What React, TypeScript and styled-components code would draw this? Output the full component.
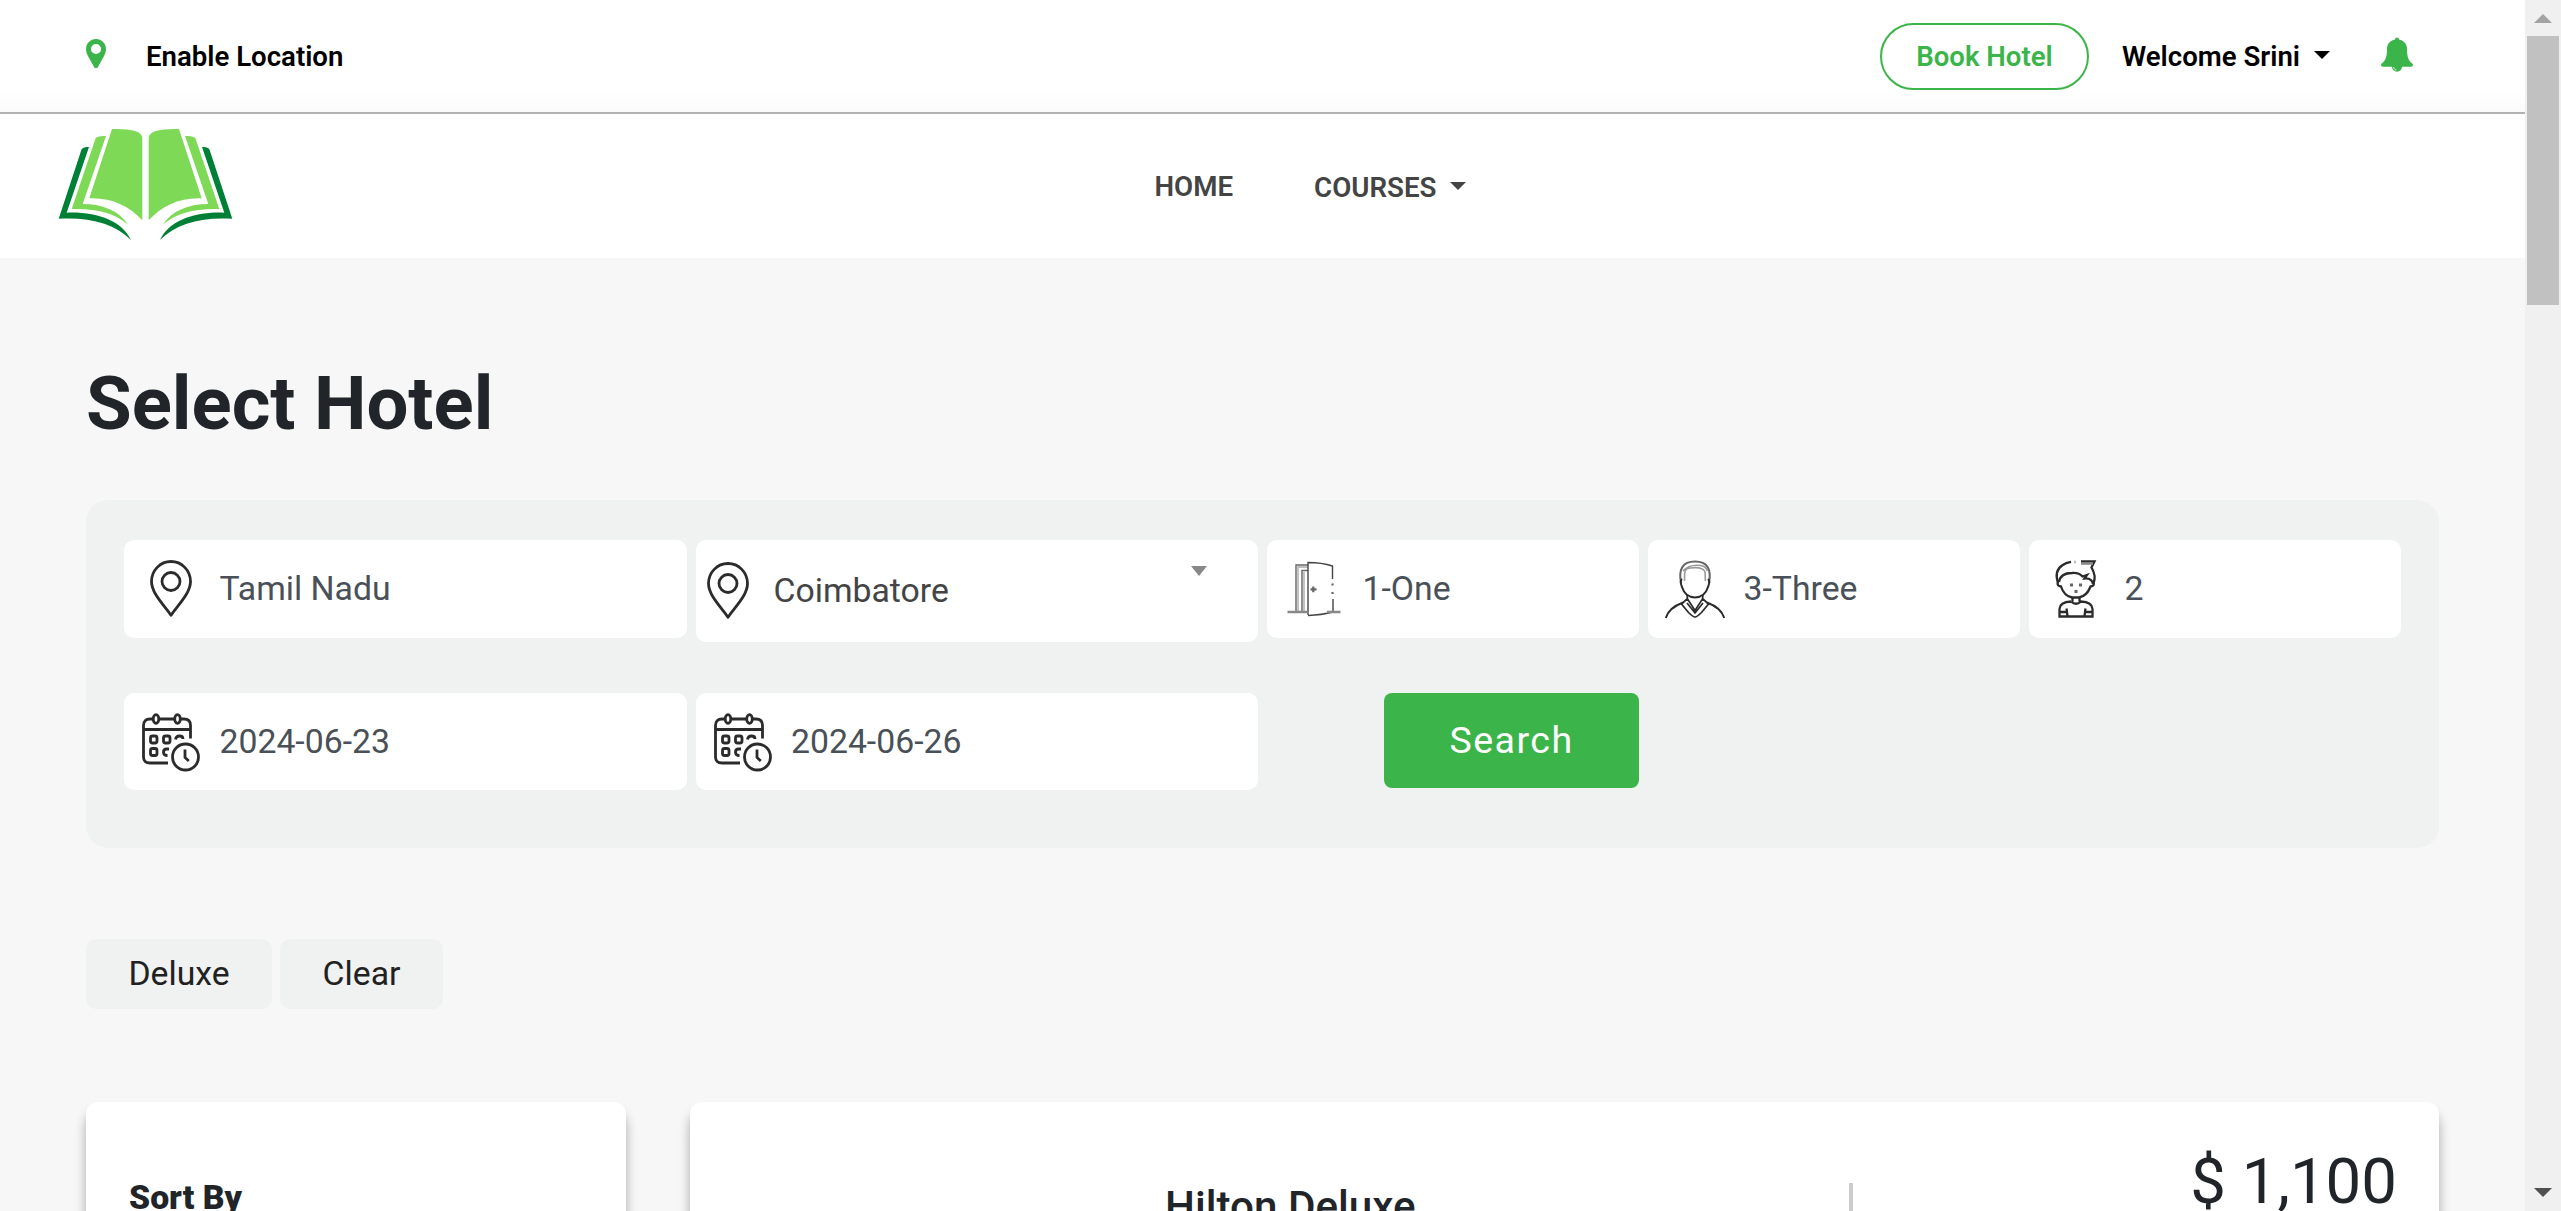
import React from 'react';
import styled, { createGlobalStyle } from 'styled-components';

const GlobalStyle = createGlobalStyle`
  * { box-sizing: border-box; }
  html, body { margin: 0; padding: 0; overflow: hidden; }
  body { font-family: Roboto, "Liberation Sans", sans-serif; color: #212529; background: #f7f7f7; }
`;

const Screen = styled.div`
  display: flex;
  width: 2561px;
  height: 1211px;
  overflow: hidden;
`;

const Page = styled.div`
  flex: 1;
  min-width: 0;
  display: flex;
  flex-direction: column;
  overflow: hidden;
  background: #f7f7f7;
`;

const TopBar = styled.div`
  flex: none;
  display: flex;
  align-items: center;
  height: 114px;
  padding: 0 112px 0 86px;
  border-bottom: 2px solid #b3b3b3;
  background: linear-gradient(#fff 80%, #fbfbfb);
  color: #000;
  font-size: 27.6px;
  font-weight: 600;
`;

const EnableLocation = styled.a`
  display: flex;
  align-items: center;
  gap: 40px;
  margin-right: auto;
  svg { margin-bottom: 5px; }
`;

const BookHotel = styled.button`
  width: 209px;
  height: 67px;
  padding: 0;
  border: 2px solid #3bb54a;
  border-radius: 34px;
  background: #fff;
  color: #3bb54a;
  font: inherit;
`;

const UserMenu = styled.div`
  display: flex;
  align-items: center;
  gap: 14px;
  margin: 0 51px 0 33px;
`;

const Caret = styled.span<{ $size?: number; $color?: string }>`
  width: 0;
  height: 0;
  margin-bottom: 2px;
  border: ${p => p.$size ?? 8}px solid transparent;
  border-top-color: ${p => p.$color ?? 'currentColor'};
  border-bottom: 0;
`;

const NavBar = styled.nav`
  flex: none;
  display: flex;
  align-items: center;
  height: 144px;
  padding-left: 56px;
  background: #fff;
`;

const NavLinks = styled.div`
  display: flex;
  align-items: center;
  gap: 81px;
  margin-left: 918.5px;
  color: #444;
  font-size: 27.7px;
  font-weight: 600;
`;

const NavLink = styled.a<{ $drop?: number }>`
  display: flex;
  align-items: center;
  gap: 14px;
  padding-top: ${p => p.$drop ?? 0}px;
`;

const Main = styled.main`
  flex: 1;
  display: flex;
  flex-direction: column;
  padding: 0 86px;
`;

const Title = styled.h1`
  flex: none;
  height: 242px;
  margin: 0;
  padding-top: 101px;
  font-size: 74.3px;
  line-height: 90px;
  font-weight: 700;
`;

const SearchPanel = styled.form`
  flex: none;
  height: 348px;
  padding: 40px 38px;
  border-radius: 22px;
  background: #eff2f1;
  display: grid;
  grid-template-columns: 562.5px 562.5px 372px 372px 372px;
  grid-template-rows: 102px 97px;
  column-gap: 9px;
  row-gap: 51px;
  align-items: start;
`;

const Field = styled.label<{ $height: number }>`
  display: flex;
  align-items: center;
  height: ${p => p.$height}px;
  border-radius: 10px;
  background: #fff;
`;

const IconSlot = styled.span<{ $compact?: boolean }>`
  flex: none;
  display: flex;
  justify-content: center;
  width: ${p => (p.$compact ? 64 : 94)}px;
  margin-right: ${p => (p.$compact ? 14 : 1.5)}px;
`;

const FieldValue = styled.span<{ $color?: string }>`
  flex: 1;
  color: ${p => p.$color ?? '#495057'};
  font-size: 33.75px;
  line-height: 40px;
`;

const SelectArrow = styled.span`
  align-self: flex-start;
  margin: 26px 51px 0 0;
  border: 8px solid transparent;
  border-top: 10px solid #888;
  border-bottom: 0;
`;

const SearchButton = styled.button`
  justify-self: end;
  width: 255px;
  height: 95px;
  padding: 0 0 2px;
  border: 0;
  border-radius: 8px;
  background: #3bb54a;
  color: #fff;
  font: 400 37.5px Roboto, "Liberation Sans", sans-serif;
  letter-spacing: 1.5px;
`;

const Chips = styled.div`
  flex: none;
  display: flex;
  gap: 8px;
  margin: 91px 0 93px;
`;

const Chip = styled.button<{ $width: number }>`
  width: ${p => p.$width}px;
  height: 70px;
  padding: 0 0 1px;
  border: 0;
  border-radius: 10px;
  background: #eff2f1;
  color: #212121;
  font: 400 33.75px Roboto, "Liberation Sans", sans-serif;
`;

const Results = styled.div`
  flex: none;
  display: flex;
  gap: 64px;
`;

const Card = styled.section`
  height: 400px;
  border-radius: 12px;
  background: #fff;
  box-shadow: 0 15px 15px -4px rgba(0, 0, 0, 0.16), 0 10px 12px rgba(0, 0, 0, 0.23);
`;

const SortCard = styled(Card)`
  width: 540px;
  padding: 76px 43px;
`;

const SortTitle = styled.h2`
  margin: 0;
  font-size: 33.75px;
  line-height: 40px;
  font-weight: 900;
`;

const HotelCard = styled(Card)`
  flex: 1;
  display: flex;
`;

const HotelName = styled.h3`
  margin: 0 0 0 475px;
  padding-top: 80px;
  width: 684px;
  font-size: 42.2px;
  line-height: 50px;
  font-weight: 500;
`;

const Divider = styled.div`
  width: 4px;
  height: 260px;
  margin-top: 81px;
  background: #ccc;
`;

const Price = styled.div`
  flex: 1;
  padding: 41px 42px 0 0;
  text-align: right;
  font-size: 63.5px;
  line-height: 78px;
`;

const Scrollbar = styled.div`
  flex: none;
  display: flex;
  flex-direction: column;
  align-items: center;
  width: 36px;
  padding: 14px 0;
  background: #f0f0f0;
`;

const ScrollArrow = styled.div<{ $down?: boolean }>`
  border: 9px solid transparent;
  ${p => (p.$down ? 'border-top-color: #505050; border-bottom: 0; margin-top: auto;' : 'border-bottom-color: #a3a3a3; border-top: 0;')}
`;

const Thumb = styled.div`
  width: 32px;
  height: 269px;
  margin-top: 13px;
  background: #c1c1c1;
`;

const BellMark = styled.svg`
  margin-bottom: 4px;
`;

const LocationMark = () => (
  <svg width="20" height="30" viewBox="0 0 20 30">
    <path fillRule="evenodd" fill="#3bb54a" d="M10 0C4.400 0 0 4.400 0 10c0 3 1 5 2.200 7.400L8.200 28.200c.8 1.500 2.800 1.500 3.600 0l6-10.800C19 15 20 13 20 10 20 4.400 15.600 0 10 0zm0 4.900a5.100 5.100 0 1 1 0 10.200 5.100 5.100 0 0 1 0-10.200z" />
  </svg>
);

const Bell = () => (
  <BellMark width="32" height="35" viewBox="0 0 32 35">
    <path fill="#3bb54a" d="M14 2.500a2 2 0 0 1 4 0c5 1 8 4.600 8 9.500 0 8 1.500 11.500 5.300 14.600 1.200 1.200.7 3.100-1 3.100H21a5 5 0 0 1-10 0H1.700c-1.700 0-2.200-1.900-1-3.100C4.500 23.500 6 20 6 12c0-4.900 3-8.500 8-9.500z" />
    <path d="M12.700 30.300c.2 1.500 1.200 2.500 2.700 2.700" fill="none" stroke="#fff" strokeWidth="0.900" />
  </BellMark>
);

const BookHalf = () => (
  <>
    <path fill="#7ed957" d="M112 129C130 128.500 142.300 131 142.300 138V220.300C129 206 112 197.500 89.300 198.300Z" />
    <path fill="#7ed957" d="M106 136L82.700 204C103 204 119 211 128 224.500C114 213 98 208.500 71.700 209L95.500 138.500Q97 135.500 106 136Z" />
    <path fill="#008037" d="M89 147L66.700 212.700C97 211.500 122 221 131 240C115 223.500 90 217 58.700 218.700L81.500 149.500Q83 146.500 89 147Z" />
  </>
);

const BookLogo = () => (
  <svg width="180" height="120" viewBox="56 126 180 120">
    <BookHalf />
    <g transform="translate(291 0) scale(-1 1)"><BookHalf /></g>
  </svg>
);

const LineIcon = styled.svg.attrs({ width: 60, height: 60, viewBox: '0 0 60 60' })<{ $weight?: number }>`
  display: block;
  fill: none;
  stroke: #2b2b2b;
  stroke-width: ${p => p.$weight ?? 2.4};
`;

const PinIcon = () => (
  <LineIcon $weight={2.8} strokeLinejoin="round">
    <path d="M30 56.300C25 48 10.500 35 10.500 22.500A19.500 20 0 0 1 49.500 22.500C49.500 35 35 48 30 56.300Z" />
    <circle cx="30" cy="22.500" r="9" />
  </LineIcon>
);

const CalendarIcon = () => (
  <LineIcon $weight={2.8}>
    <path d="M27 51H9Q2.500 51 2.500 45V13.500Q2.500 7 9 7H12M18 7H33.500M39.500 7H43Q49.500 7 49.500 13.500V26.500M2.500 17.500H49.500" />
    <ellipse cx="15" cy="7" rx="2.800" ry="4.400" />
    <ellipse cx="36.500" cy="7" rx="2.800" ry="4.400" />
    <rect x="9.500" y="24" width="6.500" height="7" rx="2" />
    <rect x="22.500" y="24" width="6.500" height="7" rx="2" />
    <path d="M34.500 27.500Q35 24 38.500 24Q42 24 42 27" />
    <rect x="9.500" y="36.500" width="6.500" height="7" rx="2" />
    <path d="M28 37H25.500Q22.500 37 22.500 40.200Q22.500 43.500 26.500 43.500" />
    <circle cx="44.500" cy="45" r="13" />
    <path d="M44 37.500V45.500L47.800 49" />
  </LineIcon>
);

const DoorIcon = () => (
  <LineIcon $weight={1.4}>
    <g stroke="#666">
      <path d="M12 53V6H24M18 53V11.500H24" stroke="#666" />
      <path d="M14 53V8H24M20 53V13" stroke="#aaa" />
      <path d="M24 56V3.500Q38 3.500 48.500 7V20M49 40V53Q38 56 24 56.500" stroke="#444" />
      <path d="M48.500 24.500V26.500M48.500 33V35" strokeWidth="2.200" />
      <path d="M3.500 53H23M43 53H56.500" stroke="#888" strokeWidth="2.400" />
      <path d="M26.500 30.300H32.500M29.300 27.500V33.300" strokeWidth="2.200" />
    </g>
  </LineIcon>
);

const AdultIcon = () => (
  <LineIcon $weight={2}>
    <path d="M16 24C13.500 11 17 2.500 30 2.500S46.500 11 44 24" stroke="#666" />
    <path d="M19.500 22C20 14 18 10 25 9C29 8.500 33 8 36 9.500C42 11 39.500 16 40.500 22M18 12Q24 5 36 6.500Q41 7.500 42.500 12" stroke="#999" strokeWidth="1.600" />
    <path d="M17 20Q14.500 22 17 28Q20 38 30 38.500Q40 38 43 28Q45.500 22 43 20" />
    <path strokeWidth="1.700" d="M22 35.500L22.500 40L30 51.500L37.500 40L38 35.500M22 40L16.500 45L23.500 53.500Q28 58 30 58Q32 58 36.500 53.500L43.500 45L38 40M22 44L30 54L38 44" />
    <path d="M.8 59Q3.500 49 18 43.500M59.200 59Q56.500 49 42 43.500" />
  </LineIcon>
);

const ChildIcon = () => (
  <LineIcon $weight={2.3}>
    <path d="M12 24Q8 12 16 6.500Q20 3.500 25 2.800M35 2.500H48.500L45.500 8.500Q50.500 17 47.500 24" />
    <path d="M35 4.500H47" stroke="#888" strokeWidth="2.600" />
    <path d="M28 3H30" stroke="#bbb" />
    <path d="M13 23Q14.500 14 26 14Q33 13.500 36.500 17.500L41 16L38.500 19.500Q46 19 47 25" />
    <path d="M12 23Q10.500 27 15 27.500Q18 37 26 38.500H33Q41 37 44.500 27.500Q49 27 47.500 23" />
    <path d="M24 26H27M33 26H36M28.500 32.500H31.500" strokeWidth="3" stroke="#666" />
    <path d="M26.500 38.500V42.500M33.500 38.500V42.500M25 42.500Q30 47 35 42.500Q46 43 46.500 50V57.500H13.500V50Q14 43 25 42.500M20.500 49.500L21.500 57M39.500 49.500L38.500 57M14 53H21M39 53H46.500" />
  </LineIcon>
);

export default function App() {
  return (
    <Screen>
      <GlobalStyle />
      <Page>
        <TopBar>
          <EnableLocation><LocationMark />Enable Location</EnableLocation>
          <BookHotel>Book Hotel</BookHotel>
          <UserMenu>Welcome Srini<Caret /></UserMenu>
          <Bell />
        </TopBar>
        <NavBar>
          <BookLogo />
          <NavLinks>
            <NavLink>HOME</NavLink>
            <NavLink $drop={2}>COURSES<Caret /></NavLink>
          </NavLinks>
        </NavBar>
        <Main>
          <Title>Select Hotel</Title>
          <SearchPanel>
            <Field $height={98}><IconSlot><PinIcon /></IconSlot><FieldValue>Tamil Nadu</FieldValue></Field>
            <Field $height={102}>
              <IconSlot $compact><PinIcon /></IconSlot>
              <FieldValue $color="#444">Coimbatore</FieldValue>
              <SelectArrow />
            </Field>
            <Field $height={98}><IconSlot><DoorIcon /></IconSlot><FieldValue>1-One</FieldValue></Field>
            <Field $height={98}><IconSlot><AdultIcon /></IconSlot><FieldValue>3-Three</FieldValue></Field>
            <Field $height={98}><IconSlot><ChildIcon /></IconSlot><FieldValue>2</FieldValue></Field>
            <Field $height={97}><IconSlot><CalendarIcon /></IconSlot><FieldValue>2024-06-23</FieldValue></Field>
            <Field $height={97}><IconSlot><CalendarIcon /></IconSlot><FieldValue>2024-06-26</FieldValue></Field>
            <SearchButton type="button">Search</SearchButton>
          </SearchPanel>
          <Chips>
            <Chip $width={186}>Deluxe</Chip>
            <Chip $width={163}>Clear</Chip>
          </Chips>
          <Results>
            <SortCard><SortTitle>Sort By</SortTitle></SortCard>
            <HotelCard>
              <HotelName>Hilton Deluxe</HotelName>
              <Divider />
              <Price>$ 1,100</Price>
            </HotelCard>
          </Results>
        </Main>
      </Page>
      <Scrollbar>
        <ScrollArrow />
        <Thumb />
        <ScrollArrow $down />
      </Scrollbar>
    </Screen>
  );
}
